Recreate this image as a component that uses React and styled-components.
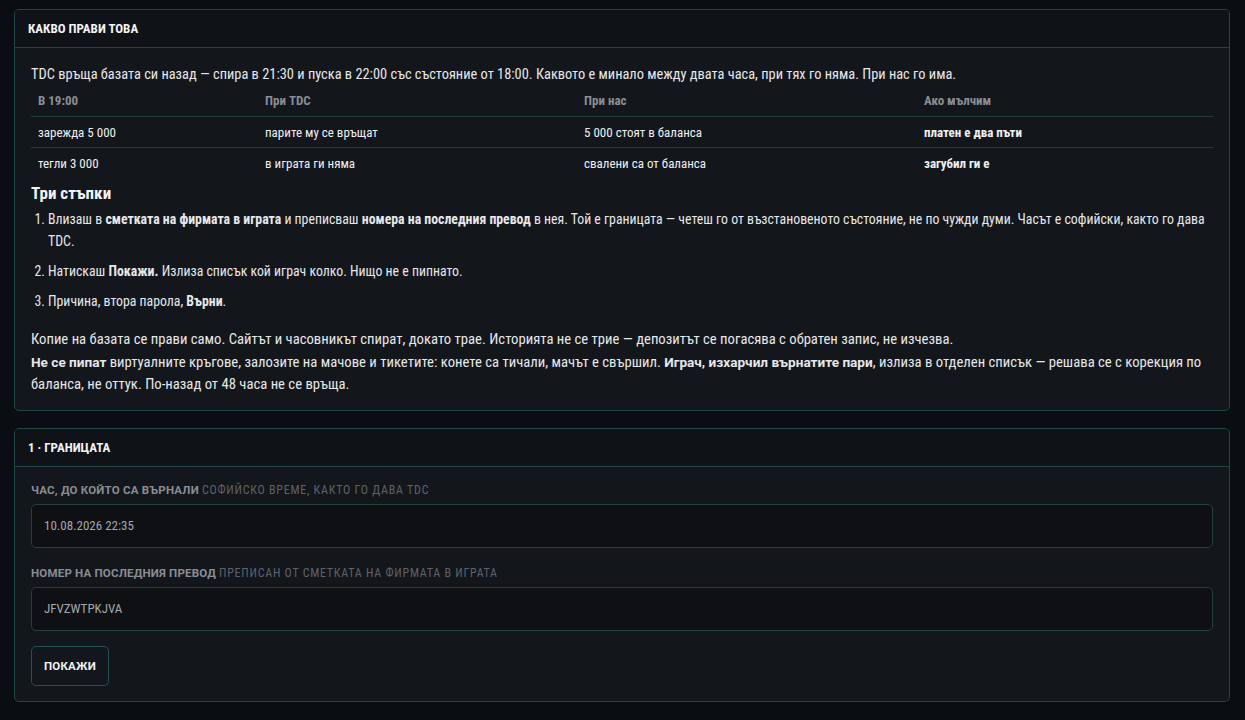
import React from "react";
import styled, { createGlobalStyle } from "styled-components";

const narrow = `"Roboto Condensed", "Liberation Sans Narrow", "Arial Narrow", Roboto, sans-serif`;
const wide = `Roboto, "Noto Sans", sans-serif`;

const GlobalStyle = createGlobalStyle`
  html, body {
    margin: 0;
    padding: 0;
    background: #0a0d11;
  }
  body {
    font-family: ${narrow};
    color: #e6e8ea;
  }
  * {
    box-sizing: border-box;
  }
`;

const Page = styled.div`
  display: flex;
  flex-direction: column;
  gap: 17px;
  padding: 9px 15px 18px 14px;
`;

const Card = styled.section`
  border: 1px solid #1f4842;
  border-radius: 5px;
  background: #13161b;
  overflow: hidden;
`;

const CardHead = styled.header`
  height: 38px;
  display: flex;
  align-items: center;
  padding: 0 13px;
  background: #0f1216;
  border-bottom: 1px solid #1f4842;
  font-family: ${narrow};
  font-weight: 700;
  font-size: 13px;
  color: #f2f3f5;
  text-transform: uppercase;
`;

const CardBody = styled.div`
  padding: ${(p) => p.$pad || "17px 16px 14px"};
`;

const Lead = styled.p`
  margin: 0 0 2px;
  font-size: 14.4px;
  line-height: 20px;
`;

const Table = styled.table`
  width: 100%;
  border-collapse: collapse;
  font-size: 13px;
  line-height: 15px;
`;

const Th = styled.th`
  text-align: left;
  font-family: ${narrow};
  font-weight: 700;
  color: #8a8e94;
  padding: 6px 7px 8px;
  border-bottom: 1px solid #1f3a37;
  width: ${(p) => p.$w || "auto"};
`;

const Td = styled.td`
  padding: 8px 7px 7px;
  border-bottom: ${(p) => (p.$last ? "none" : "1px solid #1f3a37")};
  font-weight: ${(p) => (p.$bold ? 700 : 400)};
  color: #eef0f2;
`;

const Heading = styled.h3`
  margin: 5px 0 5px;
  font-size: 17px;
  line-height: 20px;
  font-weight: 700;
  color: #f2f3f5;
`;

const Steps = styled.ol`
  margin: 0 0 16px;
  padding-left: 17px;
  font-size: 13.8px;
  line-height: 22px;

  li {
    margin-bottom: 8px;
  }
`;

/* bold inside the steps stays in the narrow face */
const Key = styled.b`
  font-weight: 700;
`;

/* bold inside the notes switches to the wide face */
const Strong = styled.strong`
  font-family: ${wide};
  font-weight: 700;
  font-size: 13.6px;
  line-height: 1;
`;

const Note = styled.p`
  margin: 0;
  font-size: 14.7px;
  line-height: 22.5px;
`;

const Field = styled.div`
  display: flex;
  flex-direction: column;
  gap: 7px;
  margin-bottom: 19px;

  &:last-of-type {
    margin-bottom: 15px;
  }
`;

const Label = styled.label`
  font-family: ${wide};
  font-size: 11.5px;
  line-height: 13px;
  font-weight: 700;
  letter-spacing: 0.2px;
  color: #8a8e94;
  text-transform: uppercase;
`;

const Hint = styled.span`
  font-family: ${narrow};
  font-weight: 400;
  font-size: 12px;
  letter-spacing: 0.75px;
  color: #5e636a;
`;

const Input = styled.input`
  height: 44px;
  width: 100%;
  padding: 0 12px;
  border: 1px solid #25413d;
  border-radius: 5px;
  background: #0e1014;
  color: #a4a8ad;
  font-family: ${narrow};
  font-size: 13px;
  outline: none;
`;

const Button = styled.button`
  height: 40px;
  padding: 0 12px;
  border: 1px solid #25544d;
  border-radius: 5px;
  background: #13171b;
  color: #f2f3f5;
  font-family: ${wide};
  font-weight: 700;
  font-size: 11.5px;
  letter-spacing: 0.2px;
  cursor: pointer;
`;

const rows = [
  ["зарежда 5 000", "парите му се връщат", "5 000 стоят в баланса", "платен е два пъти"],
  ["тегли 3 000", "в играта ги няма", "свалени са от баланса", "загубил ги е"],
];

export default function App() {
  return (
    <>
      <GlobalStyle />
      <Page>
        <Card>
          <CardHead>Какво прави това</CardHead>
          <CardBody>
            <Lead>
              TDC връща базата си назад — спира в 21:30 и пуска в 22:00 със състояние от 18:00. Каквото е минало
              между двата часа, при тях го няма. При нас го има.
            </Lead>
            <Table>
              <thead>
                <tr>
                  <Th $w="227px">В 19:00</Th>
                  <Th $w="319px">При TDC</Th>
                  <Th $w="340px">При нас</Th>
                  <Th>Ако мълчим</Th>
                </tr>
              </thead>
              <tbody>
                {rows.map((r, i) => (
                  <tr key={i}>
                    {r.map((c, j) => (
                      <Td key={j} $bold={j === 3} $last={i === rows.length - 1}>
                        {c}
                      </Td>
                    ))}
                  </tr>
                ))}
              </tbody>
            </Table>
            <Heading>Три стъпки</Heading>
            <Steps>
              <li>
                Влизаш в <Key>сметката на фирмата в играта</Key> и преписваш <Key>номера на последния превод</Key> в
                нея. Той е границата — четеш го от възстановеното състояние, не по чужди думи. Часът е софийски, както
                го дава TDC.
              </li>
              <li>
                Натискаш <Key>Покажи.</Key> Излиза списък кой играч колко. Нищо не е пипнато.
              </li>
              <li>
                Причина, втора парола, <Key>Върни</Key>.
              </li>
            </Steps>
            <Note>
              Копие на базата се прави само. Сайтът и часовникът спират, докато трае. Историята не се трие —
              депозитът се погасява с обратен запис, не изчезва.
            </Note>
            <Note>
              <Strong>Не се пипат</Strong> виртуалните кръгове, залозите на мачове и тикетите: конете са тичали,
              мачът е свършил. <Strong>Играч, изхарчил върнатите пари</Strong>, излиза в отделен списък — решава
              се с корекция по баланса, не оттук. По-назад от 48 часа не се връща.
            </Note>
          </CardBody>
        </Card>

        <Card>
          <CardHead>1 · Границата</CardHead>
          <CardBody $pad="17px 16px 15px">
            <Field>
              <Label>
                Час, до който са върнали <Hint>софийско време, както го дава TDC</Hint>
              </Label>
              <Input defaultValue="10.08.2026 22:35" />
            </Field>
            <Field>
              <Label>
                Номер на последния превод <Hint>преписан от сметката на фирмата в играта</Hint>
              </Label>
              <Input defaultValue="JFVZWTPKJVA" />
            </Field>
            <Button>ПОКАЖИ</Button>
          </CardBody>
        </Card>
      </Page>
    </>
  );
}
